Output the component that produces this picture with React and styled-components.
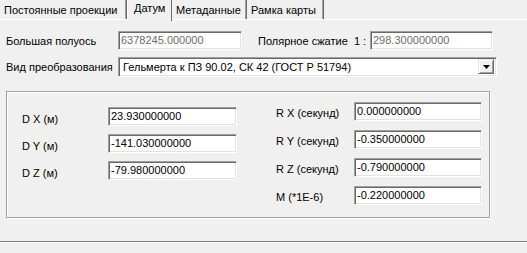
import React from "react";
import styled, { createGlobalStyle } from "styled-components";

const GlobalStyle = createGlobalStyle`
  html, body {
    margin: 0;
    padding: 0;
    background: #f0f0f0;
  }
  body {
    font-family: "Liberation Sans", Arial, sans-serif;
    font-size: 11px;
    color: #000;
  }
`;

const Window = styled.div`
  width: 527px;
  height: 253px;
  background: #f0f0f0;
  display: flex;
  flex-direction: column;
  overflow: hidden;
`;

const TabStrip = styled.div`
  display: flex;
  height: 20px;
  border-bottom: 1px solid #fff;
  box-sizing: border-box;
`;

const Tab = styled.div`
  width: ${(p) => p.w}px;
  box-sizing: border-box;
  height: ${(p) => (p.active ? 21 : 19)}px;
  margin-bottom: ${(p) => (p.active ? -1 : 0)}px;
  padding: ${(p) => (p.active ? "2px 0 0 6px" : "4px 0 0 4px")};
  background: #f0f0f0;
  border-left: ${(p) => (p.active ? "1px solid #fff" : "none")};
  border-right: 1px solid #696969;
  box-shadow: ${(p) => (p.active ? "none" : "inset -1px 0 0 #a0a0a0")};
  white-space: nowrap;
`;

const Body = styled.div`
  padding: 11px 0 0 6px;
  display: flex;
  flex-direction: column;
`;

const Row = styled.div`
  display: flex;
  align-items: center;
  height: 19px;
  margin-bottom: ${(p) => p.mb || 0}px;
`;

const Label = styled.span`
  width: ${(p) => p.w}px;
  margin-left: ${(p) => p.ml || 0}px;
  white-space: nowrap;
  padding-top: ${(p) => p.pt || 0}px;
`;

const Field = styled.div`
  width: ${(p) => p.w}px;
  height: 19px;
  box-sizing: border-box;
  background: #fff;
  border-top: 1px solid #a0a0a0;
  border-left: 1px solid #a0a0a0;
  border-right: 1px solid #fff;
  border-bottom: 1px solid #fff;
  box-shadow: inset 1px 1px 0 #696969, inset -1px -1px 0 #e3e3e3;
  color: ${(p) => (p.disabled ? "#6d6d6d" : "#000")};
  padding: 2px 0 0 2px;
  white-space: nowrap;
  overflow: hidden;
`;

const Combo = styled(Field)`
  display: flex;
  justify-content: space-between;
  padding: 0 2px 0 4px;
  align-items: center;
  height: 20px;
`;

const ArrowButton = styled.div`
  width: 16px;
  height: 15px;
  box-sizing: border-box;
  background: #f0f0f0;
  border-top: 1px solid #e3e3e3;
  border-left: 1px solid #e3e3e3;
  border-right: 1px solid #696969;
  border-bottom: 1px solid #696969;
  box-shadow: inset 1px 1px 0 #fff, inset -1px -1px 0 #a0a0a0;
  display: flex;
  align-items: center;
  justify-content: center;
`;

const GroupBox = styled.div`
  margin-top: 15px;
  width: 484px;
  height: 127px;
  box-sizing: border-box;
  border: 1px solid #a0a0a0;
  box-shadow: inset 1px 1px 0 #fff, 1px 1px 0 #fff;
  display: flex;
  padding: 0 0 0 15px;
`;

const Column = styled.div`
  display: flex;
  flex-direction: column;
  gap: ${(p) => p.gap}px;
  padding-top: ${(p) => p.pt}px;
  margin-left: ${(p) => p.ml || 0}px;
`;

const BottomRule = styled.div`
  margin-top: auto;
  margin-bottom: 10px;
  height: 1px;
  background: #808080;
  border-bottom: 1px solid #fff;
`;

const tabs = [
  { name: "Постоянные проекции", w: 127 },
  { name: "Датум", w: 45, active: true },
  { name: "Метаданные", w: 75 },
  { name: "Рамка карты", w: 77 },
];

const shifts = [
  ["D X (м)", "23.930000000"],
  ["D Y (м)", "-141.030000000"],
  ["D Z (м)", "-79.980000000"],
];

const rotations = [
  ["R X (секунд)", "0.000000000"],
  ["R Y (секунд)", "-0.350000000"],
  ["R Z (секунд)", "-0.790000000"],
  ["M (*1E-6)", "-0.220000000"],
];

export default function App() {
  return (
    <Window>
      <GlobalStyle />
      <TabStrip>
        {tabs.map((t) => (
          <Tab key={t.name} w={t.w} active={t.active}>
            {t.name}
          </Tab>
        ))}
      </TabStrip>
      <Body>
        <Row mb={7}>
          <Label w={112}>Большая полуось</Label>
          <Field w={124} disabled>
            6378245.000000
          </Field>
          <Label w={112} ml={16}>
            Полярное сжатие&nbsp; 1 :
          </Label>
          <Field w={123} disabled>
            298.300000000
          </Field>
        </Row>
        <Row>
          <Label w={112}>Вид преобразования</Label>
          <Combo w={379}>
            <span>Гельмерта к ПЗ 90.02, СК 42 (ГОСТ Р 51794)</span>
            <ArrowButton>
              <svg width="7" height="4" viewBox="0 0 7 4">
                <path d="M0 0h7L3.5 4z" fill="#000" />
              </svg>
            </ArrowButton>
          </Combo>
        </Row>
        <GroupBox>
          <Column gap={8} pt={15}>
            {shifts.map(([l, v]) => (
              <Row key={l}>
                <Label w={86} pt={4}>
                  {l}
                </Label>
                <Field w={129}>{v}</Field>
              </Row>
            ))}
          </Column>
          <Column gap={9} pt={10} ml={39}>
            {rotations.map(([l, v]) => (
              <Row key={l}>
                <Label w={78} pt={3}>
                  {l}
                </Label>
                <Field w={128}>{v}</Field>
              </Row>
            ))}
          </Column>
        </GroupBox>
      </Body>
      <BottomRule />
    </Window>
  );
}
